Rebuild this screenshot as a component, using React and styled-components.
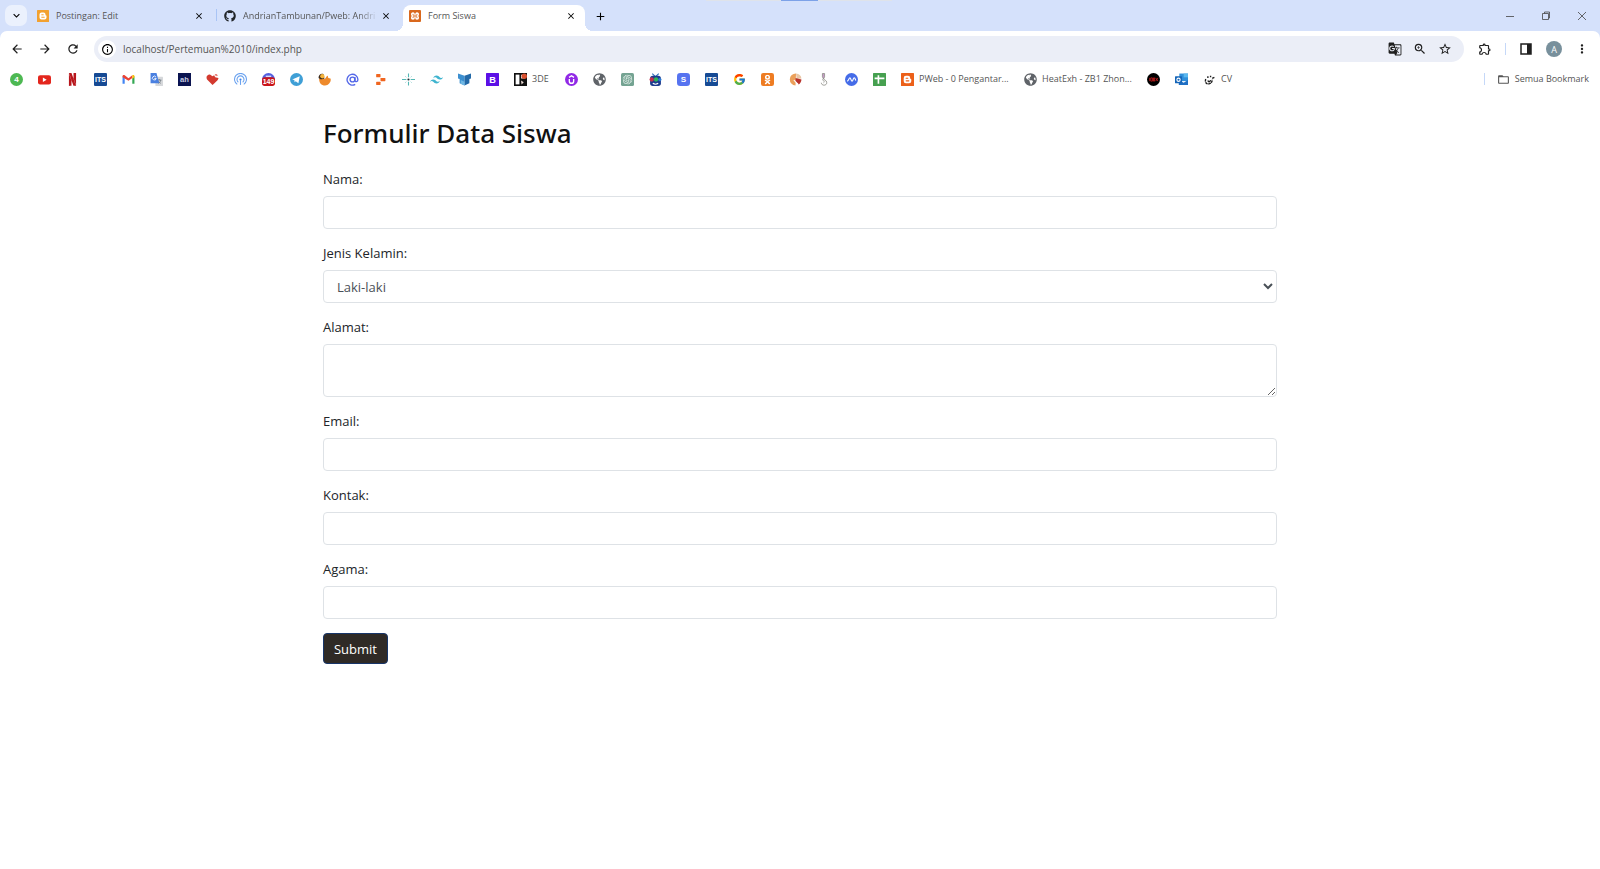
import React from "react";
import styled, { createGlobalStyle } from "styled-components";
import { FaGithub, FaGlobeAmericas } from "react-icons/fa";
import {
  MdArrowBack,
  MdArrowForward,
  MdRefresh,
  MdInfoOutline,
  MdGTranslate,
  MdZoomIn,
  MdStarBorder,
  MdOutlineExtension,
  MdMoreVert,
  MdFolderOpen,
  MdClose,
  MdAdd,
  MdKeyboardArrowDown,
} from "react-icons/md";
import { FcGoogle } from "react-icons/fc";
import { SiOpenai, SiTailwindcss, SiNetflix, SiOdnoklassniki } from "react-icons/si";

// small square/circle icon with a letter inside
const Badge = ({ bg, color = "#fff", round = 4, size = 15, children }) => (
  <svg viewBox="0 0 24 24">
    <rect width="24" height="24" rx={round} fill={bg} />
    <text
      x="12"
      y={12 + size * 0.36}
      fontSize={size}
      fontWeight="700"
      fontFamily="Liberation Sans, sans-serif"
      textAnchor="middle"
      fill={color}
    >
      {children}
    </text>
  </svg>
);

const Blogger = ({ bg }) => (
  <svg viewBox="0 0 24 24">
    <rect width="24" height="24" rx="1" fill={bg} />
    <path
      d="M9 5h4a4 4 0 0 1 4 4v1c0 1 2 .5 2 2v3a4 4 0 0 1-4 4H9a4 4 0 0 1-4-4V9a4 4 0 0 1 4-4z"
      fill="#fff"
    />
    <path d="M9.5 9.6h3M9.5 14.5h5" stroke={bg} strokeWidth="2" strokeLinecap="round" />
  </svg>
);

const Xampp = () => (
  <svg viewBox="0 0 24 24">
    <rect width="24" height="24" rx="2" fill="#d9681d" />
    <path
      d="M8 4.500c-3 0-4 2-4 4 0 1.500.5 2.500 1.500 3.500C4.500 13 4 14 4 15.500c0 2 1 4 4 4s3.500-2 3.500-4h1c0 2 .5 4 3.500 4s4-2 4-4c0-1.500-.5-2.500-1.500-3.500 1-1 1.500-2 1.500-3.500 0-2-1-4-4-4s-3.500 2-3.500 4h-1c0-2-.5-4-3.500-4z"
      fill="#fff"
    />
    <path d="M8 8v2.500h8V8M8 16v-2.500h8V16" fill="none" stroke="#d9681d" strokeWidth="1.500" />
  </svg>
);

const icons = {
  four: <Badge bg="#4db852" round={12}>4</Badge>,
  youtube: (
    <svg viewBox="0 0 24 24">
      <rect y="4" width="24" height="17" rx="4" fill="#e3261d" />
      <path d="M9 8.500v8l7-4z" fill="#fff" />
    </svg>
  ),
  netflix: <SiNetflix color="#b8161c" />,
  its: (
    <Badge bg="#164a94" round={2} size={13}>
      ITS
    </Badge>
  ),
  gmail: (
    <svg viewBox="0 0 24 24">
      <path d="M1 20V6l4 3v11z" fill="#4285f4" />
      <path d="M23 20V6l-4 3v11z" fill="#34a853" />
      <path d="M1 8V6c0-2 2-3 4-2l7 5.500L19 4v5l-7 5.500L5 10z" fill="#ea4335" />
      <path d="M19 4c2-1 4 0 4 2v2l-4 3z" fill="#fbbc04" />
    </svg>
  ),
  translate: (
    <svg viewBox="0 0 24 24">
      <rect x="10" y="7" width="14" height="17" rx="1" fill="#d6d8db" />
      <path d="M13 13h8M17 11v2M20 13c-1 4-3 5-5 6M15 15c1 2 3 3 5 4" fill="none" stroke="#6f7780" strokeWidth="1.500" />
      <path d="M1 0h11l5 19H1z" fill="#4a80e0" />
      <path d="M11 7.500a3.500 3.500 0 1 0 .5 2.500H8" fill="none" stroke="#fff" strokeWidth="1.600" />
    </svg>
  ),
  ah: (
    <Badge bg="#0b1450" round={0} size={14} color="#c7cbe0">
      ah
    </Badge>
  ),
  heart: (
    <svg viewBox="0 0 24 24">
      <path d="M12 22L2 12C-1 7 3 2 8 3l4 3 3-2 2 4 6 1c0 3-3 6-11 13z" fill="#d33a2f" />
      <path d="M16 2l2 4 4-1-2-3z" fill="#e9847d" />
    </svg>
  ),
  signal: (
    <svg viewBox="0 0 24 24" fill="none" stroke="#6aa2ef" strokeWidth="2">
      <path d="M6 21a11 11 0 1 1 12 0" />
      <path d="M8 17a6.500 6.500 0 1 1 8 0" />
      <circle cx="12" cy="12" r="2" fill="#3f83e6" stroke="none" />
      <path d="M12 13v9" />
    </svg>
  ),
  counter: (
    <svg viewBox="0 0 24 24">
      <circle cx="12" cy="12" r="12" fill="#5360e0" />
      <rect y="8" width="24" height="16" rx="5" fill="#c9151b" />
      <path d="M7 6h10" stroke="#fff" strokeWidth="2" />
      <text x="12" y="21" fontSize="13" fontWeight="700" fontFamily="Liberation Sans, sans-serif" textAnchor="middle" fill="#fff">
        149
      </text>
    </svg>
  ),
  telegram: (
    <svg viewBox="0 0 24 24">
      <circle cx="12" cy="12" r="12" fill="#3f9fd6" />
      <path d="M4 12l14-6-2.500 13-5-4-2 2-.5-4z" fill="#fff" />
    </svg>
  ),
  bird: (
    <svg viewBox="0 0 24 24">
      <path d="M2 10c4 1 7 0 10 1 3-2 4-7 6-6l1 4 4 1c2 4-2 13-10 13C6 23 2 18 2 10z" fill="#ee8a2b" />
      <path d="M1 9c0-5 4-9 9-7 1 3 1 5 2 8-4 2-8 2-11-1z" fill="#3a2a1d" />
      <circle cx="8" cy="6" r="4" fill="#f6b53c" />
    </svg>
  ),
  at: (
    <svg viewBox="0 0 24 24" fill="none" stroke="#5468e8" strokeWidth="2.500">
      <circle cx="12" cy="12" r="4.500" />
      <path d="M16.500 7.500V14c0 3 5.500 3 5.500-2a10 10 0 1 0-5 9" />
    </svg>
  ),
  replit: (
    <svg viewBox="0 0 24 24" fill="#f0651f">
      <rect x="4" y="2" width="8" height="6" rx="1" />
      <rect x="12" y="9" width="9" height="6" rx="1" />
      <rect x="4" y="16" width="8" height="6" rx="1" />
    </svg>
  ),
  spark: (
    <svg viewBox="0 0 24 24" stroke="#53b7b4" strokeWidth="2">
      <path d="M12 1v7M12 16v7M0 12h8M16 12h8" />
      <circle cx="12" cy="12" r="2" fill="#1c2b33" stroke="none" />
      <path d="M6 6l2 2M18 6l-2 2M6 18l2-2M18 18l-2-2" strokeWidth="1" />
    </svg>
  ),
  tailwind: <SiTailwindcss color="#3fb4cf" />,
  book: (
    <svg viewBox="0 0 24 24">
      <path d="M0 1l12 4v18l-9-4v-8l-3-1z" fill="#3c8fd0" />
      <path d="M24 1L12 5v18l9-4v-8l3-1z" fill="#2369a8" />
      <path d="M5 13l7 3v7l-7-3z" fill="#6fb8e4" />
    </svg>
  ),
  bootstrap: (
    <Badge bg="#5b0fe6" round={1} size={17}>
      B
    </Badge>
  ),
  tde: (
    <svg viewBox="0 0 24 24">
      <rect width="24" height="24" fill="#111" />
      <rect x="3" y="3" width="7" height="18" fill="#fff" />
      <path d="M13 3h7v7h-7zM13 14l5 3-4 4z" fill="#f3e2dc" />
      <circle cx="19" cy="6" r="5" fill="#d9502f" />
    </svg>
  ),
  udemy: (
    <svg viewBox="0 0 24 24">
      <circle cx="12" cy="12" r="12" fill="#9129e6" />
      <path d="M8 11v4a4 4 0 0 0 8 0v-4M7.500 8L12 5l4.500 3" fill="none" stroke="#fff" strokeWidth="2.500" />
    </svg>
  ),
  globe: <FaGlobeAmericas color="#5f6368" />,
  openai: (
    <svg viewBox="0 0 24 24">
      <rect width="24" height="24" rx="3" fill="#74a392" />
      <SiOpenai x="3" y="3" size={18} color="#e4f0eb" />
    </svg>
  ),
  tv: (
    <svg viewBox="0 0 24 24">
      <path d="M6 1l5 5M18 1l-5 5" stroke="#3274bd" strokeWidth="2" />
      <rect x="2" y="5" width="20" height="19" rx="5" fill="#1c3b8e" />
      <circle cx="5" cy="12" r="4" fill="#c2314e" />
      <circle cx="13" cy="12" r="4" fill="#2fb457" />
      <circle cx="20" cy="12" r="3" fill="#2d7cd5" />
      <path d="M7 19c3 2 7 2 10 0" stroke="#fff" strokeWidth="2" fill="none" />
    </svg>
  ),
  s: (
    <Badge bg="#5673f0" round={6}>
      S
    </Badge>
  ),
  google: <FcGoogle />,
  ok: (
    <svg viewBox="0 0 24 24">
      <rect width="24" height="24" rx="4" fill="#ee7c22" />
      <SiOdnoklassniki x="3" y="3" size={18} color="#fff" />
    </svg>
  ),
  ball: (
    <svg viewBox="0 0 24 24">
      <path d="M12 23A11 11 0 1 1 13 1z" fill="#eba05a" />
      <path d="M13 1a11 11 0 0 1 10 9l-9 1z" fill="#e9c7a6" />
      <path d="M12 9l11 3c0 3-2 7-5 9l-6-5z" fill="#b8322b" />
      <path d="M9 13l8 8" stroke="#fff" strokeWidth="2" />
    </svg>
  ),
  figure: (
    <svg viewBox="0 0 24 24" fill="none" stroke="#8c8c86" strokeWidth="1.500">
      <path d="M10 1h4v6l-2 4-2-4z" fill="#c79ac9" />
      <path d="M12 10c-5 4 5 5 0 8M8 18c0 6 10 6 10 0s-6-4-6-8" />
    </svg>
  ),
  wave: (
    <svg viewBox="0 0 24 24">
      <circle cx="12" cy="12" r="12" fill="#456ce8" />
      <path d="M4 15c3-1 3-6 5-6s2 6 4 6 2-6 4-6 2 3 3 5" fill="none" stroke="#fff" strokeWidth="2" />
    </svg>
  ),
  sheets: (
    <svg viewBox="0 0 24 24">
      <rect width="24" height="24" rx="1" fill="#46a050" />
      <path d="M10 4v16M3 10h18" stroke="#fff" strokeWidth="3" />
    </svg>
  ),
  blogger: <Blogger bg="#ec6019" />,
  rox: (
    <svg viewBox="0 0 24 24">
      <circle cx="12" cy="12" r="12" fill="#000" />
      <path d="M5 9v6M7 9h3v6H7zM12 9h2v6h-2zM16 9l4 6M20 9l-4 6" stroke="#c61f1f" strokeWidth="1.500" fill="none" />
    </svg>
  ),
  outlook: (
    <svg viewBox="0 0 24 24">
      <rect x="8" y="1" width="16" height="14" fill="#2f8fdb" />
      <rect x="16" y="1" width="8" height="7" fill="#59b7ee" />
      <path d="M7 13l9 5 8-5v9H7z" fill="#1f6fc4" />
      <rect y="6" width="13" height="13" rx="1" fill="#1565b8" />
      <circle cx="6.500" cy="12.500" r="3" fill="none" stroke="#fff" strokeWidth="2" />
    </svg>
  ),
  cv: (
    <svg viewBox="0 0 24 24" fill="none" stroke="#1c1c1c" strokeWidth="2.500">
      <path d="M5 11c-2 7 2 10 6 9s6-3 6-8" strokeDasharray="5 1" />
      <path d="M9 6v3M14 5v3M17 10l4-2M9 14c1 3 4 3 5-1" />
    </svg>
  ),
};

// w is the width kept for the bookmark title
const bookmarks = [
  { icon: "four", name: "WhatsApp" },
  { icon: "youtube", name: "YouTube" },
  { icon: "netflix", name: "Netflix" },
  { icon: "its", name: "myITS" },
  { icon: "gmail", name: "Gmail" },
  { icon: "translate", name: "Translate" },
  { icon: "ah", name: "ah" },
  { icon: "heart", name: "Heart" },
  { icon: "signal", name: "Signal" },
  { icon: "counter", name: "Counter" },
  { icon: "telegram", name: "Telegram" },
  { icon: "bird", name: "Bird" },
  { icon: "at", name: "Mail" },
  { icon: "replit", name: "Replit" },
  { icon: "spark", name: "Spark" },
  { icon: "tailwind", name: "Tailwind" },
  { icon: "book", name: "Book" },
  { icon: "bootstrap", name: "Bootstrap" },
  { icon: "tde", name: "3DE", title: "3DE", w: 18 },
  { icon: "udemy", name: "Udemy" },
  { icon: "globe", name: "Web" },
  { icon: "openai", name: "ChatGPT" },
  { icon: "tv", name: "TV" },
  { icon: "s", name: "S" },
  { icon: "its", name: "ITS" },
  { icon: "google", name: "Google" },
  { icon: "ok", name: "OK" },
  { icon: "ball", name: "Ball" },
  { icon: "figure", name: "Figure" },
  { icon: "wave", name: "Wave" },
  { icon: "sheets", name: "Sheets" },
  { icon: "blogger", name: "PWeb", title: "PWeb - 0 Pengantar...", w: 90 },
  { icon: "globe", name: "HeatExh", title: "HeatExh - ZB1 Zhon...", w: 90 },
  { icon: "rox", name: "Rox" },
  { icon: "outlook", name: "Outlook" },
  { icon: "cv", name: "CV", title: "CV", w: 14 },
];

const fields = [
  { id: "nama", label: "Nama:" },
  { id: "jenis_kelamin", label: "Jenis Kelamin:", kind: "select" },
  { id: "alamat", label: "Alamat:", kind: "textarea" },
  { id: "email", label: "Email:", type: "email" },
  { id: "kontak", label: "Kontak:" },
  { id: "agama", label: "Agama:" },
];

function Tab({ icon, title, active, fade }) {
  return (
    <StTab $active={active}>
      <StFavicon>{icon}</StFavicon>
      <StTabTitle $fade={fade}>{title}</StTabTitle>
      <StTabClose aria-label="Tutup tab">
        <MdClose />
      </StTabClose>
    </StTab>
  );
}

function TabBar() {
  return (
    <StTabBar>
      <StLoadBar />
      <StTabSearch aria-label="Cari tab">
        <MdKeyboardArrowDown />
      </StTabSearch>

      <Tab icon={<Blogger bg="#f2a130" />} title="Postingan: Edit" />
      <StTabLine />
      <Tab icon={<FaGithub />} title="AndrianTambunan/Pweb: Andri" fade />
      <Tab icon={<Xampp />} title="Form Siswa" active />
      <StNewTab aria-label="Tab baru">
        <MdAdd />
      </StNewTab>

      <StWindowBtns>
        <StWindowBtn aria-label="Minimalkan">
          <svg viewBox="0 0 10 10">
            <path d="M1 5.500h8" />
          </svg>
        </StWindowBtn>
        <StWindowBtn aria-label="Pulihkan">
          <svg viewBox="0 0 10 10">
            <path d="M1.500 2.500h6v6h-6zM3.500 2.500V1h5v6H7.500" />
          </svg>
        </StWindowBtn>
        <StWindowBtn aria-label="Tutup">
          <svg viewBox="0 0 10 10">
            <path d="M1 1l8 8M9 1L1 9" />
          </svg>
        </StWindowBtn>
      </StWindowBtns>
    </StTabBar>
  );
}

function Toolbar() {
  return (
    <StToolbar>
      <StNavBtns>
        <StIconBtn aria-label="Kembali">
          <MdArrowBack />
        </StIconBtn>
        <StIconBtn aria-label="Maju">
          <MdArrowForward />
        </StIconBtn>
        <StIconBtn aria-label="Muat ulang">
          <MdRefresh />
        </StIconBtn>
      </StNavBtns>

      <StAddress>
        <StInfo aria-label="Info situs">
          <MdInfoOutline />
        </StInfo>
        <StUrl aria-label="Alamat situs" defaultValue="localhost/Pertemuan%2010/index.php" />
        <StIconBtn aria-label="Terjemahkan">
          <MdGTranslate />
        </StIconBtn>
        <StIconBtn aria-label="Zoom">
          <MdZoomIn />
        </StIconBtn>
        <StIconBtn aria-label="Bookmark">
          <MdStarBorder />
        </StIconBtn>
      </StAddress>

      <StTools>
        <StIconBtn aria-label="Ekstensi">
          <MdOutlineExtension />
        </StIconBtn>
        <StLine />
        <StIconBtn aria-label="Panel samping">
          <svg viewBox="0 0 14 14">
            <path d="M2 2h10v10H2z" fill="none" stroke="#1f1f1f" strokeWidth="1.500" />
            <path d="M8 2h4v10H8z" fill="#1f1f1f" />
          </svg>
        </StIconBtn>
        <StAvatar aria-label="Profil">A</StAvatar>
        <StIconBtn aria-label="Menu">
          <MdMoreVert />
        </StIconBtn>
      </StTools>
    </StToolbar>
  );
}

function BookmarkBar() {
  return (
    <StBookmarks>
      {bookmarks.map((item, i) => (
        <StBookmark key={i} href="#" aria-label={item.name}>
          {icons[item.icon]}
          {item.title && <StBookmarkTitle $w={item.w}>{item.title}</StBookmarkTitle>}
        </StBookmark>
      ))}
      <StAllBookmarks>
        <StLine />
        <StBookmark href="#">
          <MdFolderOpen />
          <span>Semua Bookmark</span>
        </StBookmark>
      </StAllBookmarks>
    </StBookmarks>
  );
}

function Field({ id, label, kind, type = "text" }) {
  return (
    <StField>
      <StLabel htmlFor={id}>{label}</StLabel>
      {kind === "select" && (
        <StSelect id={id} name={id}>
          <option>Laki-laki</option>
          <option>Perempuan</option>
        </StSelect>
      )}
      {kind === "textarea" && <StTextarea id={id} name={id} />}
      {!kind && <StInput id={id} name={id} type={type} />}
    </StField>
  );
}

function App() {
  const onSubmit = (e) => {
    e.preventDefault();
  };

  return (
    <>
      <GlobalStyle />
      <StHeader>
        <TabBar />
        <Toolbar />
        <BookmarkBar />
      </StHeader>

      <StContainer>
        <StTitle>Formulir Data Siswa</StTitle>
        <form onSubmit={onSubmit}>
          {fields.map((field) => (
            <Field key={field.id} {...field} />
          ))}
          <StSubmit type="submit">Submit</StSubmit>
        </form>
      </StContainer>
    </>
  );
}

export default App;

const GlobalStyle = createGlobalStyle`
  * {
    box-sizing: border-box;
  }
  body {
    margin: 0;
    background-color: #fff;
    color: #212529;
    font-family: "Open Sans", "Noto Sans", sans-serif;
  }
  button, input, select, textarea {
    font-family: inherit;
  }
  button {
    display: flex;
    align-items: center;
    justify-content: center;
    flex-shrink: 0;
    padding: 0;
    border: none;
    background: none;
    cursor: pointer;
  }
  svg {
    display: block;
    flex-shrink: 0;
  }
`;

const StHeader = styled.header`
  background-color: #d5e1fb;
`;

const StTabBar = styled.div`
  position: relative;
  display: flex;
  align-items: flex-end;
  height: 31px;
  padding-left: 5px;
`;

const StLoadBar = styled.div`
  position: absolute;
  top: 0;
  left: 50%;
  width: 186px;
  height: 1px;
  margin-left: -94px;
  background: linear-gradient(to right, #dfe3ea 75px, #7da2e8 75px, #7da2e8 112px, #dfe3ea 112px);
`;

const StTabSearch = styled.button`
  width: 22px;
  height: 21px;
  margin: 0 4px 5px 0;
  border-radius: 7px;
  background-color: #ebf1fd;
  font-size: 13px;
`;

const StTab = styled.div`
  position: relative;
  display: flex;
  align-items: center;
  width: 182px;
  height: 26px;
  margin-right: 3px;
  padding: 0 8px 5px 6px;
  border-radius: 8px 8px 0 0;
  background-color: ${(props) => (props.$active ? "#fff" : "transparent")};

  /* lengkungan di kedua sisi bawah tab aktif */
  &::before,
  &::after {
    content: "";
    display: ${(props) => (props.$active ? "block" : "none")};
    position: absolute;
    bottom: 0;
    width: 8px;
    height: 8px;
  }
  &::before {
    right: 100%;
    background: radial-gradient(circle at 0 0, transparent 8px, #fff 8px);
  }
  &::after {
    left: 100%;
    background: radial-gradient(circle at 100% 0, transparent 8px, #fff 8px);
  }
`;

const StFavicon = styled.span`
  width: 12px;
  height: 12px;
  margin-right: 7px;

  svg {
    width: 12px;
    height: 12px;
  }
`;

const StTabTitle = styled.span`
  flex: 1;
  min-width: 0;
  overflow: hidden;
  white-space: nowrap;
  font-size: 9px;
  line-height: 14px;
  color: #555;
  ${(props) => props.$fade && "mask-image: linear-gradient(to right, #000 85%, transparent);"}
`;

const StTabClose = styled.button`
  width: 12px;
  height: 12px;
  margin-left: 2px;
  font-size: 10px;
`;

const StTabLine = styled.span`
  width: 1px;
  height: 12px;
  margin: 0 1px 10px 0;
  background-color: #a9c4f5;
`;

const StNewTab = styled.button`
  width: 14px;
  height: 14px;
  margin: 0 0 8px 5px;
  font-size: 13px;
`;

const StWindowBtns = styled.div`
  display: flex;
  margin-left: auto;
  padding-bottom: 5px;
`;

const StWindowBtn = styled.button`
  width: 36px;
  height: 21px;

  svg {
    width: 10px;
    height: 10px;
    fill: none;
    stroke: #444;
    stroke-width: 0.8;
  }
`;

const StToolbar = styled.div`
  display: flex;
  align-items: center;
  height: 36px;
  border-radius: 7px 7px 0 0;
  background-color: #fff;
`;

const StNavBtns = styled.div`
  display: flex;
  gap: 14px;
  padding: 0 14px 0 10px;
`;

const StIconBtn = styled.button`
  width: 14px;
  height: 14px;
  color: #1f1f1f;
  font-size: 14px;

  svg {
    width: 14px;
    height: 14px;
  }
`;

const StAddress = styled.div`
  flex: 1;
  display: flex;
  align-items: center;
  gap: 11px;
  height: 26px;
  padding: 0 12px 0 4px;
  border-radius: 13px;
  background-color: #ebeef7;
`;

const StInfo = styled.button`
  width: 18px;
  height: 18px;
  border-radius: 50%;
  background-color: #fff;
  font-size: 13px;
`;

const StUrl = styled.input`
  flex: 1;
  min-width: 0;
  padding: 0;
  margin-left: -4px;
  border: none;
  outline: none;
  background: none;
  font-size: 10px;
  color: #555;
`;

const StTools = styled.div`
  display: flex;
  align-items: center;
  gap: 13px;
  padding: 0 11px 0 14px;
`;

const StLine = styled.span`
  width: 1px;
  height: 12px;
  background-color: #c5d8f8;
`;

const StAvatar = styled.button`
  width: 16px;
  height: 16px;
  border-radius: 50%;
  background-color: #78909c;
  color: #fff;
  font-size: 9px;
`;

const StBookmarks = styled.nav`
  display: flex;
  align-items: center;
  gap: 15px;
  height: 24px;
  padding: 0 11px 0 10px;
  background-color: #fff;
`;

const StBookmark = styled.a`
  display: flex;
  align-items: center;
  gap: 5px;
  color: #555;
  font-size: 9px;
  line-height: 14px;
  text-decoration: none;
  white-space: nowrap;

  > svg {
    width: 13px;
    height: 13px;
  }
`;

const StBookmarkTitle = styled.span`
  width: ${(props) => props.$w}px;
`;

const StAllBookmarks = styled.div`
  display: flex;
  align-items: center;
  gap: 12px;
  margin-left: auto;
`;

const StContainer = styled.main`
  max-width: 978px;
  margin: 0 auto;
  padding: 24px 12px;
`;

const StTitle = styled.h2`
  margin: 0 0 17px;
  font-family: "Noto Sans", "Open Sans", sans-serif;
  font-size: 26px;
  font-weight: 500;
  line-height: 36px;
  color: #111;
`;

const StField = styled.div`
  display: flex;
  flex-direction: column;
  gap: 6px;
  margin-bottom: 13px;
`;

const StLabel = styled.label`
  font-size: 13px;
  line-height: 22px;
`;

const StInput = styled.input`
  width: 100%;
  height: 33px;
  padding: 5px 9px;
  border: 1px solid #dee2e6;
  border-radius: 4px;
  background-color: #fff;
  color: #495057;
  font-size: 13px;
`;

const StSelect = styled(StInput).attrs({ as: "select" })``;

const StTextarea = styled(StInput).attrs({ as: "textarea" })`
  height: 53px;
  resize: vertical;
`;

const StSubmit = styled.button`
  width: 65px;
  height: 31px;
  margin-top: 14px;
  border: 1px solid #173569;
  border-radius: 4px;
  background-color: #2f2a26;
  color: #fff;
  font-size: 13px;
`;
